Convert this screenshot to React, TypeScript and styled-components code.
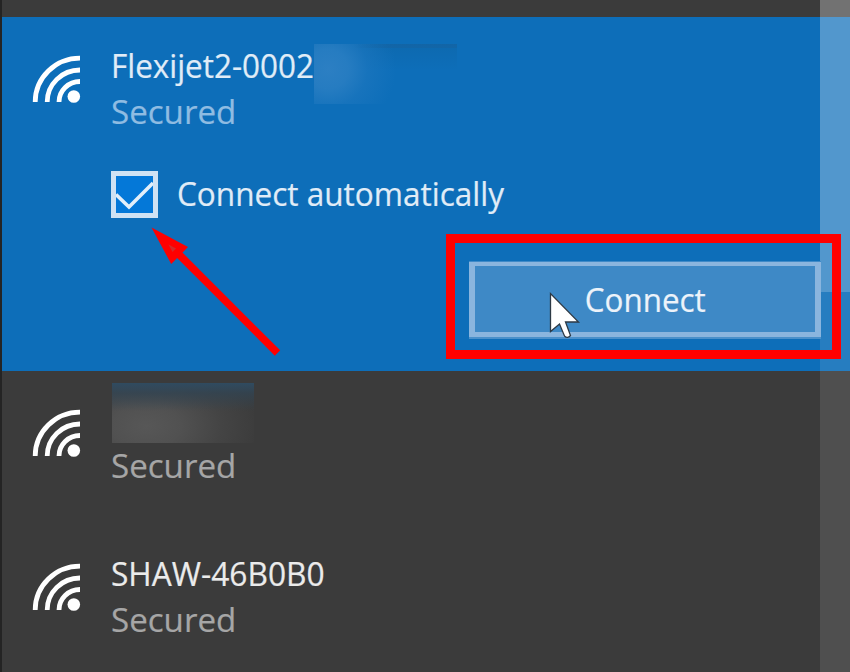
import React from "react";
import styled, { createGlobalStyle } from "styled-components";

const GlobalStyle = createGlobalStyle`
  * { box-sizing: border-box; }
  body { margin: 0; background: #3b3b3b; }
`;

const Panel = styled.main`
  position: relative;
  width: 850px;
  height: 672px;
  overflow: hidden;
  padding-top: 17px;
  border-left: 2px solid #242424;
  background: #3b3b3b;
  font-family: "Open Sans", "Noto Sans", sans-serif;
  font-size: 32px;
  line-height: 44px;
`;

const Network = styled.section<{ $active?: boolean }>`
  display: flex;
  flex-direction: column;
  height: ${(p) => (p.$active ? 354 : 154)}px;
  padding: 27px 29px 0 30px;
  background: ${(p) => (p.$active ? "#0d6eb9" : "transparent")};
`;

const Summary = styled.div`
  display: flex;
  gap: 30px;
`;

const SignalIcon = styled.svg`
  flex: none;
  width: 49px;
  height: 48px;
  margin-top: 11px;
`;

const Details = styled.div`
  display: flex;
  flex-direction: column;
  height: 92px;
`;

const NameLine = styled.div`
  display: flex;
  height: 46px;
`;

const Label = styled.span<{ $scale: number; $width: number; $color: string }>`
  display: block;
  flex: none;
  width: ${(p) => p.$width}px;
  height: 46px;
  white-space: nowrap;
  color: ${(p) => p.$color};
  -webkit-text-stroke: 0.2px ${(p) => p.$color};
  transform: scaleX(${(p) => p.$scale});
  transform-origin: 0 50%;
`;

const ActiveRedaction = styled.div`
  width: 143px;
  height: 60px;
  background:
    linear-gradient(90deg, transparent 40px, rgba(22, 98, 160, 0.55) 75px) 0 0 / 100% 4px no-repeat,
    radial-gradient(ellipse 68px 66px at 14px 25px, #2c7fc3 0%, #267cc1 30%, rgba(28, 118, 190, 0.65) 58%, rgba(13, 110, 185, 0) 100%),
    linear-gradient(#0d69af, #0d6eb9 26px);
`;

const HiddenName = styled.div`
  width: 142px;
  height: 60px;
  margin: -15px 0 1px 1px;
  background:
    linear-gradient(#304b60, rgba(50, 68, 82, 0.8) 10px, rgba(59, 59, 59, 0) 28px),
    radial-gradient(ellipse 116px 72px at 34px 43px, #575757 0%, #515151 30%, #444 65%, #3b3b3b 100%);
`;

const Option = styled.label`
  display: flex;
  align-items: center;
  gap: 19px;
  margin: 35px 0 0 79px;
  height: 47px;
`;

const CheckBox = styled.span`
  display: flex;
  flex: none;
  width: 47px;
  height: 47px;
  border: 5px solid #cfe2f4;
  background: #0478d8;
`;

const ConnectButton = styled.button`
  position: relative;
  z-index: 1;
  display: flex;
  align-items: center;
  width: 352px;
  height: 75px;
  margin: 44px 0 0 437px;
  padding: 4px 0 0 109px;
  border: solid #8ab5de;
  border-width: 4px 6px 5px;
  box-shadow: 0 -1px 0 #3f8ac8, 0 2px 0 #4a90ca;
  background: #3e89c6;
  font: inherit;
`;

const ScrollTrack = styled.div`
  position: absolute;
  top: 0;
  right: 0;
  width: 30px;
  height: 672px;
  background: rgba(255, 255, 255, 0.105);
`;

const ScrollThumb = styled.div`
  height: 292px;
  background: rgba(255, 255, 255, 0.205);
`;

const Highlight = styled.div`
  position: absolute;
  z-index: 2;
  left: 444px;
  top: 234px;
  width: 395px;
  height: 125px;
  border: 9px solid #f00;
`;

const Overlay = styled.svg<{ $x: number; $y: number }>`
  position: absolute;
  z-index: 3;
  left: ${(p) => p.$x}px;
  top: ${(p) => p.$y}px;
`;

function Wifi() {
  return (
    <SignalIcon viewBox="0 0 49 48" fill="none" stroke="#fff" strokeWidth="4.8">
      <path d="M3.200 47A44.800 43.800 0 0 1 48 3.200" />
      <path d="M15.200 47A32.800 32 0 0 1 48 15" />
      <path d="M27 47A21 20.500 0 0 1 48 26.500" />
      <circle cx="41.8" cy="41.500" r="6.300" fill="#fff" stroke="none" />
    </SignalIcon>
  );
}

export default function App() {
  return (
    <>
      <GlobalStyle />
      <Panel>
        <Network $active>
          <Summary>
            <Wifi />
            <Details>
              <NameLine>
                <Label $scale={0.982} $width={203} $color="#e0ecf7">Flexijet2-0002</Label>
                <ActiveRedaction />
              </NameLine>
              <Label $scale={1.035} $width={130} $color="#8fbce2">Secured</Label>
            </Details>
          </Summary>
          <Option>
            <CheckBox>
              <svg width="37" height="37" viewBox="0 0 37 37" fill="none">
                <path d="M0 18.500L13 31L37 7" stroke="#e3effa" strokeWidth="3.600" />
              </svg>
            </CheckBox>
            <Label $scale={0.985} $width={330} $color="#e0ecf7">Connect automatically</Label>
          </Option>
          <ConnectButton>
            <Label $scale={0.98} $width={125} $color="#ecf3fa">Connect</Label>
          </ConnectButton>
        </Network>
        <Network>
          <Summary>
            <Wifi />
            <Details>
              <HiddenName />
              <Label $scale={1.035} $width={130} $color="#a6a6a6">Secured</Label>
            </Details>
          </Summary>
        </Network>
        <Network>
          <Summary>
            <Wifi />
            <Details>
              <Label $scale={0.99} $width={220} $color="#ebebeb">SHAW-46B0B0</Label>
              <Label $scale={1.035} $width={130} $color="#a6a6a6">Secured</Label>
            </Details>
          </Summary>
        </Network>
        <ScrollTrack>
          <ScrollThumb />
        </ScrollTrack>
        <Highlight />
        <Overlay $x={148} $y={226} width="136" height="132" viewBox="150 226 136 132">
          <path d="M175 250.500L277.500 353" stroke="#f00" strokeWidth="7.6" />
          <path d="M151.500 227.500L188 247L171.200 264Z" fill="#f00" />
          <path d="M168.500 244.500L176 248.500L172.500 252Z" fill="#d32a2a" />
        </Overlay>
        <Overlay $x={547} $y={291} width="32" height="50" viewBox="549 291 32 50">
          <path
            d="M550.500 293.500V331.500L559.500 324L564.500 336Q567.500 339 570.500 335.500L565.500 322H578.500Z"
            fill="#fff"
            stroke="#2c3945"
            strokeWidth="1.3"
          />
        </Overlay>
      </Panel>
    </>
  );
}
